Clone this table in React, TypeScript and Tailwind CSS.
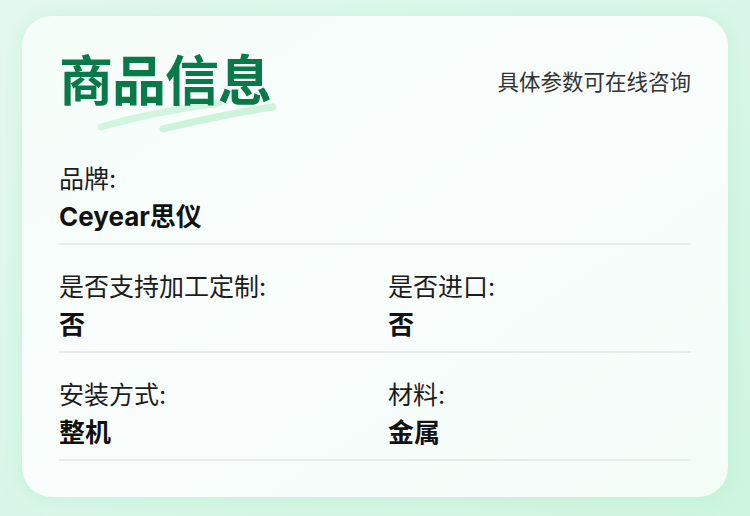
import React from 'react';

const specs: { label: string; value: string }[][] = [
  [{ label: '品牌:', value: 'Ceyear思仪' }],
  [
    { label: '是否支持加工定制:', value: '否' },
    { label: '是否进口:', value: '否' },
  ],
  [
    { label: '安装方式:', value: '整机' },
    { label: '材料:', value: '金属' },
  ],
];

const font = { fontFamily: '"Inter", "Noto Sans CJK SC", sans-serif' };

const App: React.FC = () => {
  return (
    <div
      className="w-[750px] h-[516px] bg-gradient-to-br from-[#e4f9ee] via-[#d9f7e8] to-[#cdf5df] pt-[16px] px-[22px]"
      style={font}
    >
      <div className="h-[481px] rounded-[30px] bg-gradient-to-br from-[#f5fdf9] via-[#f9fefc] to-[#f4fcf8] px-[37px] shadow-[0_0_18px_rgba(180,235,205,0.5)]">
        {/* Header */}
        <div className="flex items-center justify-between pt-[39px] mb-[28px]">
          <div className="relative">
            <svg
              className="absolute left-[36px] top-[30px]"
              width="190"
              height="50"
              viewBox="0 0 190 50"
            >
              <path
                d="M6 42 C 40 32, 80 24, 124 18"
                stroke="#d2f5df"
                strokeWidth="7"
                strokeLinecap="round"
                fill="none"
              />
              <path
                d="M68 44 C 110 34, 150 26, 178 22"
                stroke="#cdf3db"
                strokeWidth="7"
                strokeLinecap="round"
                fill="none"
              />
            </svg>
            <h1 className="relative text-[54px] leading-[54px] font-bold text-[#087a49] tracking-[-1px]">
              商品信息
            </h1>
          </div>
          <span className="text-[21.5px] leading-[30px] text-[#333333]">
            具体参数可在线咨询
          </span>
        </div>

        {/* Rows */}
        {specs.map((row, i) => (
          <div
            key={i}
            className="grid grid-cols-[329px_1fr] border-b-2 border-[#e7ebe9] pt-[26px] pb-[10px]"
          >
            {row.map((item) => (
              <div key={item.label} className="flex flex-col gap-[6px]">
                <span className="text-[25px] leading-[32px] text-[#1c1c1c]">{item.label}</span>
                <span className="text-[26px] leading-[32px] font-bold text-[#111111]">
                  {item.value}
                </span>
              </div>
            ))}
          </div>
        ))}
      </div>
    </div>
  );
};

export default App;
